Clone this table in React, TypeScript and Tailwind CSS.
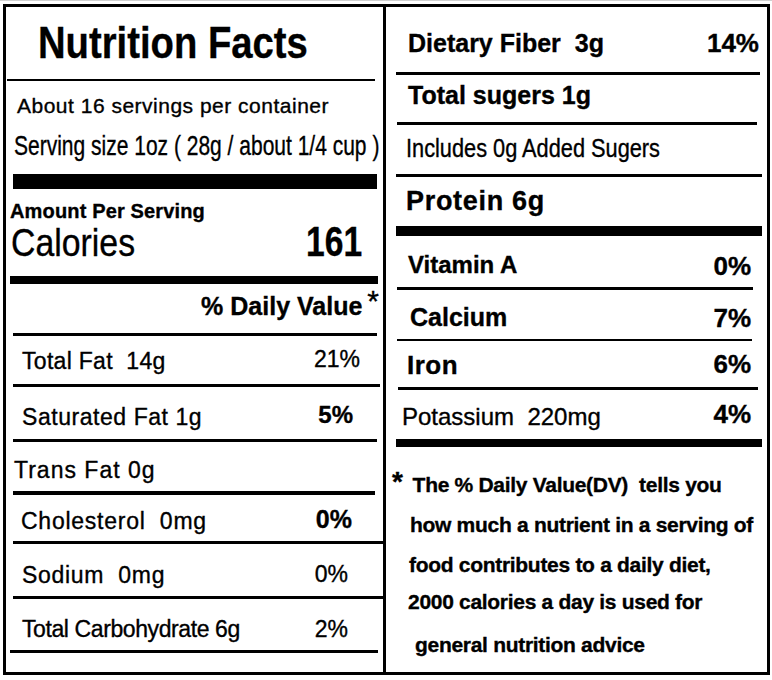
const Rule = ({ className }: { className: string }) => <div className={`shrink-0 bg-black ${className}`} />;

export default function App() {
  return (
    <div className="w-[772px] h-[680px] bg-white border-t border-[#d0d0d0] font-['Liberation_Sans',Arial,sans-serif] text-black [-webkit-text-stroke:0.35px_black]">
      <div className="mt-[3px] ml-[3px] w-[767px] h-[671px] border-[3px] border-black flex">
        {/* left column */}
        <div className="w-[377px] shrink-0 flex flex-col">
          <div className="h-[72px] shrink-0 pt-[13px] pl-[32px]">
            <h1 className="inline-block origin-left scale-x-[0.85] whitespace-nowrap text-[45px] leading-none font-bold">
              Nutrition Facts
            </h1>
          </div>
          <Rule className="h-[2px] ml-[1px] w-[368px]" />
          <div className="h-[93px] shrink-0 flex flex-col items-start">
            <p className="mt-[14px] ml-[11px] whitespace-nowrap text-[21px] leading-none tracking-[0.5px]">
              About 16 servings per container
            </p>
            <p className="mt-[16px] ml-[8px] inline-block origin-left scale-x-[0.75] whitespace-nowrap text-[28px] leading-none">
              Serving size 1oz ( 28g / about 1/4 cup )
            </p>
          </div>
          <Rule className="h-[15px] ml-[7px] w-[364px]" />
          <div className="h-[87px] shrink-0 flex flex-col">
            <p className="mt-[12px] ml-[4px] whitespace-nowrap text-[20px] leading-none font-bold tracking-[0.15px]">
              Amount Per Serving
            </p>
            <div className="flex items-baseline justify-between pl-[5px] pr-[21px]">
              <span className="inline-block origin-left scale-x-[0.89] text-[38px] leading-none">Calories</span>
              <span className="inline-block origin-right scale-x-[0.8] text-[42px] leading-none font-bold">161</span>
            </div>
          </div>
          <Rule className="h-[8px] ml-[4px] w-[368px]" />
          <div className="h-[49px] shrink-0 flex justify-end items-start pr-[4px]">
            <span className="mt-[10px] whitespace-nowrap text-[25px] leading-none font-bold">% Daily Value</span>
            <span className="mt-[2px] ml-[5px] text-[30px] leading-none">*</span>
          </div>
          <Rule className="h-[3px] ml-[7px] w-[364px]" />

          <div className="h-[48px] shrink-0 flex justify-between items-start">
            <span className="mt-[13.5px] ml-[16px] whitespace-pre text-[23px] leading-none tracking-[0.3px]">Total Fat  14g</span>
            <span className="mt-[11.5px] mr-[23px] text-[23px] leading-none">21%</span>
          </div>
          <Rule className="h-[3px] ml-[7px] w-[367px]" />
          <div className="h-[52px] shrink-0 flex justify-between items-start">
            <span className="mt-[18.5px] ml-[16px] whitespace-pre text-[23px] leading-none tracking-[0.55px]">Saturated Fat 1g</span>
            <span className="mt-[15.7px] mr-[30px] text-[24px] leading-none font-bold">5%</span>
          </div>
          <Rule className="h-[3px] ml-[7px] w-[364px]" />
          <div className="h-[49px] shrink-0 flex items-start">
            <span className="mt-[16.5px] ml-[8px] whitespace-pre text-[23px] leading-none tracking-[1px]">Trans Fat 0g</span>
          </div>
          <Rule className="h-[4px] ml-[7px] w-[362px]" />
          <div className="h-[46px] shrink-0 flex justify-between items-start">
            <span className="mt-[14.5px] ml-[15px] whitespace-pre text-[23px] leading-none tracking-[0.75px]">Cholesterol  0mg</span>
            <span className="mt-[11.8px] mr-[31px] text-[25px] leading-none font-bold">0%</span>
          </div>
          <Rule className="h-[3px] ml-[7px] w-[370px]" />
          <div className="h-[52px] shrink-0 flex justify-between items-start">
            <span className="mt-[19.5px] ml-[16px] whitespace-pre text-[23px] leading-none tracking-[0.7px]">Sodium  0mg</span>
            <span className="mt-[18.5px] mr-[35px] text-[23px] leading-none">0%</span>
          </div>
          <Rule className="h-[3px] ml-[7px] w-[370px]" />
          <div className="h-[51px] shrink-0 flex justify-between items-start">
            <span className="mt-[18.5px] ml-[16px] whitespace-pre text-[23px] leading-none tracking-[-0.4px]">Total Carbohydrate 6g</span>
            <span className="mt-[18.5px] mr-[35px] text-[23px] leading-none">2%</span>
          </div>
          <Rule className="h-[3px] ml-[4px] w-[368px]" />
        </div>

        {/* right column */}
        <div className="flex-1 border-l-[3px] border-black flex flex-col">
          <div className="h-[65px] shrink-0 flex justify-between items-start">
            <span className="mt-[23.8px] ml-[22px] whitespace-pre text-[25px] leading-none font-bold">Dietary Fiber  3g</span>
            <span className="mt-[23px] mr-[8px] text-[26px] leading-none font-bold">14%</span>
          </div>
          <Rule className="h-[3px] ml-[10px] w-[364px]" />
          <div className="h-[47px] shrink-0">
            <p className="mt-[7.8px] ml-[22px] whitespace-nowrap text-[25px] leading-none font-bold">Total sugers 1g</p>
          </div>
          <Rule className="h-[3px] ml-[11px] w-[360px]" />
          <div className="h-[49px] shrink-0">
            <p className="mt-[10.8px] ml-[20px] inline-block origin-left scale-x-[0.87] whitespace-nowrap text-[25px] leading-none">
              Includes 0g Added Sugers
            </p>
          </div>
          <Rule className="h-[3px] ml-[10px] w-[366px]" />
          <div className="h-[49px] shrink-0">
            <p className="mt-[11.1px] ml-[20px] whitespace-nowrap text-[27px] leading-none font-bold tracking-[0.7px]">Protein 6g</p>
          </div>
          <Rule className="h-[10px] ml-[10px] w-[366px]" />

          <div className="h-[51px] shrink-0 flex justify-between items-start">
            <span className="mt-[16.7px] ml-[22px] whitespace-nowrap text-[24px] leading-none font-bold">Vitamin A</span>
            <span className="mt-[17px] mr-[16px] text-[26px] leading-none font-bold">0%</span>
          </div>
          <Rule className="h-[3px] ml-[11px] w-[356px]" />
          <div className="h-[49px] shrink-0 flex justify-between items-start">
            <span className="mt-[14.8px] ml-[24px] text-[25px] leading-none font-bold">Calcium</span>
            <span className="mt-[15px] mr-[16px] text-[26px] leading-none font-bold">7%</span>
          </div>
          <Rule className="h-[2px] ml-[11px] w-[355px]" />
          <div className="h-[46px] shrink-0 flex justify-between items-start">
            <span className="mt-[11px] ml-[21px] text-[26px] leading-none font-bold tracking-[0.5px]">Iron</span>
            <span className="mt-[10px] mr-[16px] text-[26px] leading-none font-bold">6%</span>
          </div>
          <Rule className="h-[3px] ml-[12px] w-[360px]" />
          <div className="h-[49px] shrink-0 flex justify-between items-start">
            <span className="mt-[14.7px] ml-[16px] whitespace-pre text-[24px] leading-none">Potassium  220mg</span>
            <span className="mt-[11px] mr-[16px] text-[26px] leading-none font-bold">4%</span>
          </div>
          <Rule className="h-[8px] ml-[10px] w-[366px]" />

          <div className="flex-1 pt-[21.4px] flex flex-col text-[21px] leading-none font-bold tracking-[-0.3px] whitespace-pre">
            <div className="flex items-start">
              <span className="ml-[6px] text-[28px] leading-none">*</span>
              <span className="ml-[10px] mt-[5.8px]">The % Daily Value(DV)  tells you</span>
            </div>
            <p className="mt-[18px] ml-[24px]">how much a nutrient in a serving of</p>
            <p className="mt-[19px] ml-[23px]">food contributes to a daily diet,</p>
            <p className="mt-[16px] ml-[22px]">2000 calories a day is used for</p>
            <p className="mt-[22px] ml-[29px]">general nutrition advice</p>
          </div>
        </div>
      </div>
    </div>
  );
}
